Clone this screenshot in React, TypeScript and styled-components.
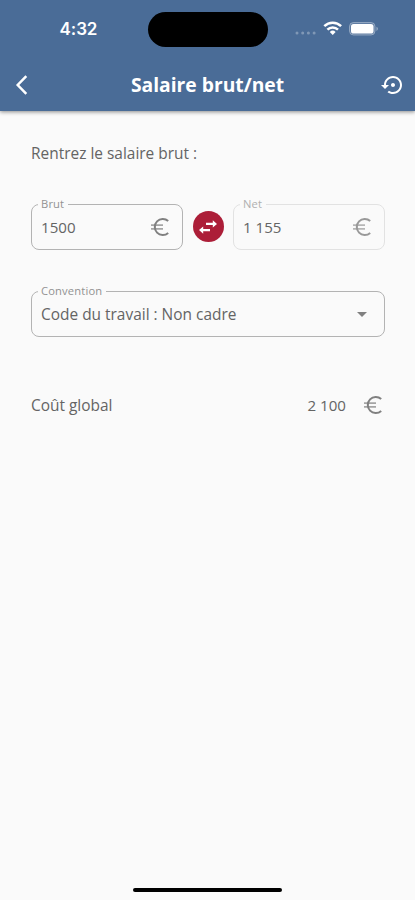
import React from "react";
import styled, { createGlobalStyle } from "styled-components";

const GlobalStyle = createGlobalStyle`
  * { box-sizing: border-box; }
  body { margin: 0; background: #fafafa; font-family: "Open Sans", sans-serif; }
`;

const Screen = styled.div`
  display: flex;
  flex-direction: column;
  width: 415px;
  height: 900px;
  overflow: hidden;
  background: #fafafa;
  color: #646464;
`;

const Header = styled.header`
  height: 111px;
  flex: none;
  background: #4a6c97;
  color: #fff;
  box-shadow: 0 1px 4px rgba(0, 0, 0, 0.45);
`;

const StatusBar = styled.div`
  display: grid;
  grid-template-columns: 148px 120px 1fr;
  height: 58px;
  align-items: center;
`;

const Clock = styled.time`
  padding-left: 9px;
  text-align: center;
  font: 600 17px/20px Inter, sans-serif;
  letter-spacing: -0.1px;
`;

const Island = styled.div`
  height: 35px;
  border-radius: 18px;
  background: #000;
`;

const StatusIcons = styled.div`
  display: flex;
  align-items: center;
  padding-left: 27px;
`;

const AppBar = styled.div`
  display: grid;
  grid-template-columns: 44px 1fr 44px;
  align-items: center;
  height: 53px;
`;

const IconButton = styled.button`
  display: flex;
  padding: 0 0 0 10px;
  border: 0;
  background: none;
  color: inherit;
`;

const Title = styled.h1`
  margin: 0;
  text-align: center;
  font-size: 19.3px;
  line-height: 26px;
  font-weight: 700;
`;

const Content = styled.main`
  flex: 1;
  padding: 30px 30px 0 31px;
  font-size: 15.45px;
`;

const Prompt = styled.p`
  margin: 0 0 32px;
  line-height: 24px;
`;

const AmountRow = styled.div`
  display: grid;
  grid-template-columns: 152px 50px 152px;
  align-items: end;
  height: 53px;
  margin-bottom: 34px;
`;

const Outline = styled.fieldset<{ $faded?: boolean }>`
  display: block;
  min-width: 0;
  height: 53px;
  margin: 0;
  padding: 0 9px;
  border: 1px solid ${(p) => (p.$faded ? "#e2e2e2" : "#b3b3b3")};
  border-radius: 8px;
`;

const Label = styled.legend<{ $faded?: boolean }>`
  margin-left: -3px;
  padding: 0 4px 0 3px;
  font-size: 11.2px;
  line-height: 14px;
  letter-spacing: 0.15px;
  color: ${(p) => (p.$faded ? "#b0b0b0" : "#929292")};
`;

const FieldBody = styled.div`
  display: flex;
  align-items: center;
  justify-content: space-between;
  height: 32px;
  padding-right: 1px;
`;

const Value = styled.span`
  line-height: 24px;
`;

const Amount = styled(Value)`
  font-size: 15.1px;
`;

const SwapButton = styled.button`
  display: flex;
  align-items: center;
  justify-content: center;
  width: 31px;
  height: 31px;
  margin: 0 auto 8px;
  padding: 0;
  border: 0;
  border-radius: 50%;
  background: #ac1e38;
  color: #fff;
`;

const TotalRow = styled.div`
  display: flex;
  align-items: center;
  height: 24px;
  margin-top: 56px;
`;

const TotalLabel = styled.span`
  line-height: 24px;
  padding-bottom: 1px;
`;

const TotalAmount = styled(Amount)`
  margin-left: auto;
  margin-right: 15px;
`;

const HomeArea = styled.footer`
  display: flex;
  justify-content: center;
  height: 13px;
`;

const HomeIndicator = styled.div`
  width: 149px;
  height: 4px;
  margin-top: 1px;
  border-radius: 3px;
  background: #000;
`;

function Icon({ d }: { d: string }) {
  return (
    <svg width="24" height="24" viewBox="0 0 24 24" fill="currentColor" aria-hidden="true">
      <path d={d} />
    </svg>
  );
}

const SWAP =
  "M7.2 11.4L3 15.1l4.2 3.7v-2.5H14v-2.4H7.2zM21 8.9l-4.2-3.7v2.5H10v2.4h6.8v2.5z";
const RESTORE =
  "M14 12c0-1.1-.9-2-2-2s-2 .9-2 2 .9 2 2 2 2-.9 2-2zm-2-9c-4.97 0-9 4.03-9 9H0l4 4 4-4H5c0-3.87 3.13-7 7-7s7 3.13 7 7-3.13 7-7 7c-1.51 0-2.91-.49-4.06-1.3l-1.42 1.44C8.04 20.3 9.94 21 12 21c4.97 0 9-4.03 9-9s-4.03-9-9-9z";

const IconSlot = styled.span<{ $faded?: boolean }>`
  display: flex;
  color: ${(p) => (p.$faded ? "#999" : "#808080")};
`;

function Euro({ faded }: { faded?: boolean }) {
  return (
    <IconSlot $faded={faded}>
      <svg width="24" height="24" viewBox="0 0 24 24" fill="none" stroke="currentColor" aria-hidden="true">
        <path d="M20.2 6.1A8 8 0 1 0 20.2 17.9" strokeWidth="2" />
        <path d="M3 10.2h12M3 13.8h12" strokeWidth="1.8" strokeOpacity="0.7" />
      </svg>
    </IconSlot>
  );
}

export default function App() {
  return (
    <>
      <GlobalStyle />
      <Screen>
        <Header>
          <StatusBar>
            <Clock>4:32</Clock>
            <Island />
            <StatusIcons>
              <svg width="86" height="18" viewBox="0 0 86 18" aria-hidden="true">
                <g fill="#fff" fillOpacity="0.3">
                  <circle cx="2" cy="13" r="1.5" />
                  <circle cx="7.7" cy="13" r="1.5" />
                  <circle cx="13.4" cy="13" r="1.5" />
                  <circle cx="19.1" cy="13" r="1.5" />
                </g>
                <g fill="none" stroke="#fff" strokeWidth="2.5">
                  <path d="M29.3 6.2a12 12 0 0 1 16.8 0" />
                  <path d="M32.4 9.6a7.6 7.6 0 0 1 10.6 0" />
                </g>
                <path d="M34.8 12a4.2 4.2 0 0 1 5.8 0l-2.9 3z" fill="#fff" />
                <rect x="54.5" y="2.5" width="25.5" height="12.5" rx="4" fill="#fff" fillOpacity="0.12" stroke="#fff" strokeOpacity="0.35" />
                <rect x="56" y="4" width="22.5" height="9.5" rx="2.6" fill="#fff" />
                <path d="M81.5 6.7v4.2a2.3 2.3 0 0 0 0-4.2z" fill="#fff" fillOpacity="0.45" />
              </svg>
            </StatusIcons>
          </StatusBar>
          <AppBar>
            <IconButton aria-label="Retour">
              <svg width="24" height="24" viewBox="0 0 24 24" fill="none" stroke="currentColor" strokeWidth="2.5">
                <path d="M16.3 3.2L7.7 12l8.6 8.8" />
              </svg>
            </IconButton>
            <Title>Salaire brut/net</Title>
            <IconButton aria-label="Réinitialiser">
              <Icon d={RESTORE} />
            </IconButton>
          </AppBar>
        </Header>
        <Content>
          <Prompt>Rentrez le salaire brut :</Prompt>
          <AmountRow>
            <Outline>
              <Label>Brut</Label>
              <FieldBody>
                <Amount>1500</Amount>
                <Euro />
              </FieldBody>
            </Outline>
            <SwapButton aria-label="Inverser">
              <Icon d={SWAP} />
            </SwapButton>
            <Outline $faded>
              <Label $faded>Net</Label>
              <FieldBody>
                <Amount>1 155</Amount>
                <Euro faded />
              </FieldBody>
            </Outline>
          </AmountRow>
          <Outline>
            <Label>Convention</Label>
            <FieldBody>
              <Value>Code du travail : Non cadre</Value>
              <IconSlot><Icon d="M7 10l5 5 5-5z" /></IconSlot>
            </FieldBody>
          </Outline>
          <TotalRow>
            <TotalLabel>Coût global</TotalLabel>
            <TotalAmount>2 100</TotalAmount>
            <Euro />
          </TotalRow>
        </Content>
        <HomeArea>
          <HomeIndicator />
        </HomeArea>
      </Screen>
    </>
  );
}
